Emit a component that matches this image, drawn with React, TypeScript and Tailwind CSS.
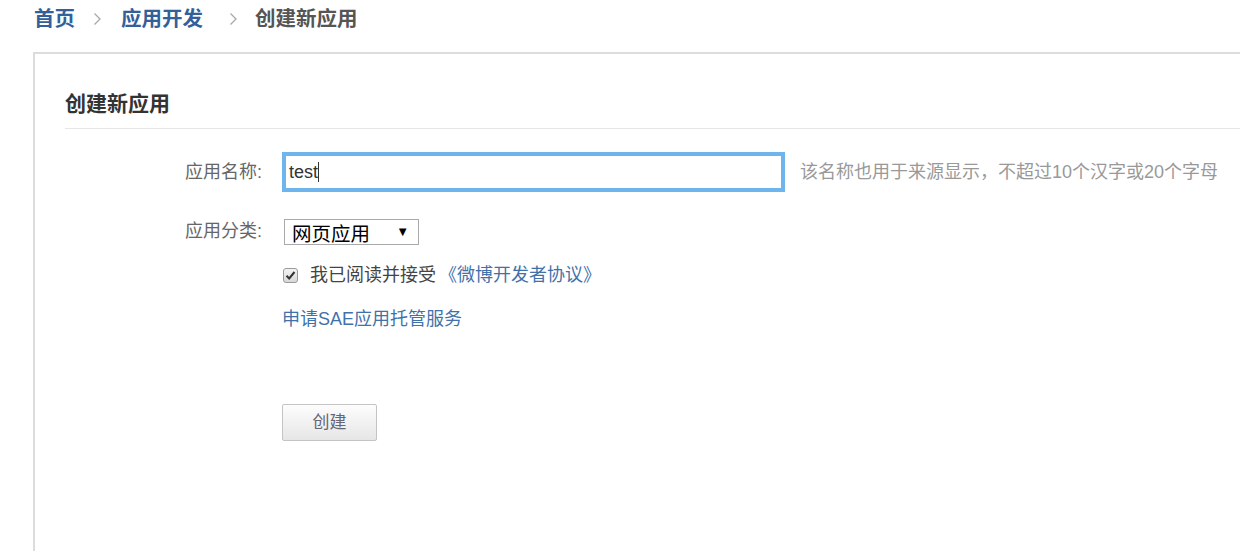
import React from "react";

const FONT = { fontFamily: '"Liberation Sans", "Noto Sans CJK SC", sans-serif' };

const Chevron = ({ className = "" }: { className?: string }) => (
  <svg width="9" height="14" viewBox="0 0 9 14" className={className}>
    <path d="M1.5 1.5 L7 7 L1.5 12.5" fill="none" stroke="#a8a8a8" strokeWidth="1.3" />
  </svg>
);

const Breadcrumb = () => (
  <div className="h-[52px] pl-[34px] flex items-start pt-[5px]">
    <div className="flex items-center h-[28px] text-[20.5px] font-bold">
      <span className="text-[#33609a]">首页</span>
      <Chevron className="ml-[18px] mr-[19px]" />
      <span className="text-[#33609a]">应用开发</span>
      <Chevron className="ml-[26px] mr-[17px]" />
      <span className="text-[#555]">创建新应用</span>
    </div>
  </div>
);

const FormRow = ({ label, children, className = "" }: { label?: string; children: React.ReactNode; className?: string }) => (
  <div className={`flex items-center ${className}`}>
    <div className="w-[217px] shrink-0 pr-[20px] text-right text-[18px] text-[#666]">{label}</div>
    {children}
  </div>
);

const CheckBox = () => (
  <span className="w-[15px] h-[15px] rounded-[3px] border border-[#9a9a9a] bg-gradient-to-b from-[#f4f4f4] to-[#d8d8d8] flex items-center justify-center">
    <svg width="11" height="11" viewBox="0 0 11 11">
      <path d="M1.5 5.8 L4.2 8.5 L9.5 2" fill="none" stroke="#333" strokeWidth="2" />
    </svg>
  </span>
);

export default function App() {
  return (
    <div className="w-[1240px] h-[551px] overflow-hidden bg-white" style={FONT}>
      <Breadcrumb />
      <div className="ml-[33px] border-l-2 border-t-2 border-[#dcdcdc] h-[500px] pl-[30px]">
        <div className="pt-[36px] pb-[11px] border-b border-[#e6e6e6]">
          <h2 className="text-[21px] leading-[27px] font-bold text-[#333]">创建新应用</h2>
        </div>

        <FormRow label="应用名称:" className="mt-[23px]">
          <div className="w-[503px] h-[40px] border-4 border-[#6db5ec] flex items-center pl-[3px] text-[18px] text-[#333]">
            test<span className="w-px h-[20px] bg-[#333]" />
          </div>
          <span className="ml-[15px] text-[18px] text-[#999]">该名称也用于来源显示，不超过10个汉字或20个字母</span>
        </FormRow>

        <FormRow label="应用分类:" className="mt-[26px]">
          <div className="ml-[2px] w-[135px] h-[26px] border border-[#a9a9a9] bg-white flex items-center justify-between pl-[7px] pr-[9px] overflow-hidden">
            <span className="text-[19.5px] leading-[22px] text-black mt-[4px]">网页应用</span>
            <span className="text-[13px] text-black">▼</span>
          </div>
        </FormRow>

        <FormRow className="mt-[17px]">
          <div className="flex items-center ml-[1px]">
            <CheckBox />
            <span className="ml-[12px] text-[18px] text-[#444]">我已阅读并接受</span>
            <span className="ml-[3px] text-[18px] text-[#3f72aa]">《微博开发者协议》</span>
          </div>
        </FormRow>

        <FormRow className="mt-[17px]">
          <span className="text-[18px] text-[#3f72aa]">申请SAE应用托管服务</span>
        </FormRow>

        <FormRow className="mt-[71px]">
          <button className="w-[95px] h-[37px] border border-[#c4c4c4] rounded-[2px] bg-gradient-to-b from-[#fdfdfd] to-[#e6e6e6] text-[17px] text-[#667]">
            创建
          </button>
        </FormRow>
      </div>
    </div>
  );
}
